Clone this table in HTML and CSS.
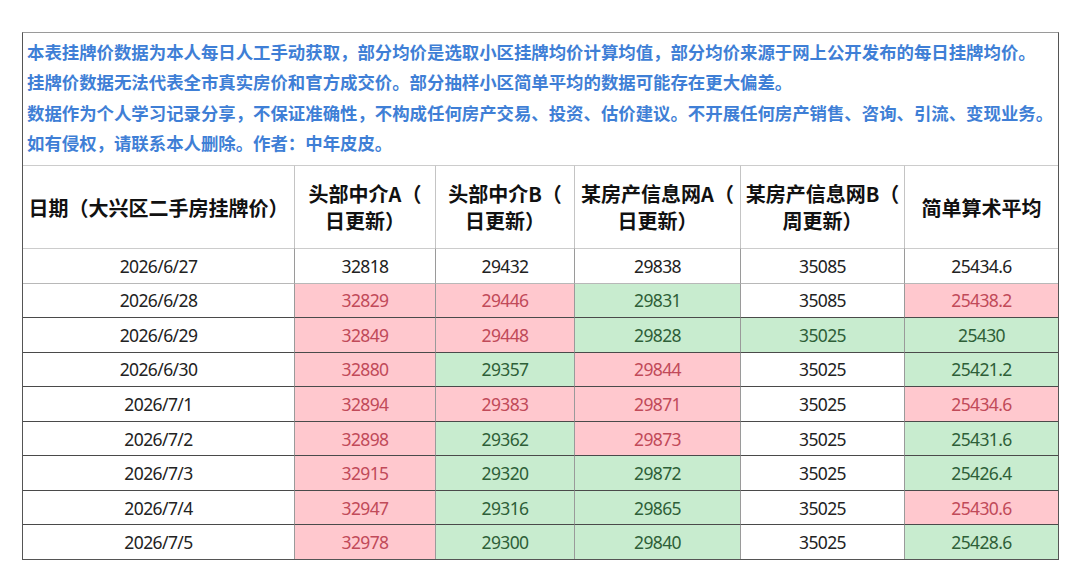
FILE: index.html
```html
<!DOCTYPE html>
<html lang="zh-CN">
<head>
<meta charset="utf-8">
<title>大兴区二手房挂牌价</title>
<link rel="stylesheet" href="styles.css">
</head>
<body>
<div class="sheet">
  <div class="notes">
    <p>本表挂牌价数据为本人每日人工手动获取，部分均价是选取小区挂牌均价计算均值，部分均价来源于网上公开发布的每日挂牌均价。</p>
    <p>挂牌价数据无法代表全市真实房价和官方成交价。部分抽样小区简单平均的数据可能存在更大偏差。</p>
    <p>数据作为个人学习记录分享，不保证准确性，不构成任何房产交易、投资、估价建议。不开展任何房产销售、咨询、引流、变现业务。</p>
    <p>如有侵权，请联系本人删除。作者：中年皮皮。</p>
  </div>
  <table class="grid">
    <thead>
      <tr>
        <th class="c-date">日期（大兴区二手房挂牌价）</th>
        <th class="c-a">头部中介A（<br>日更新）</th>
        <th class="c-b">头部中介B（<br>日更新）</th>
        <th class="c-na">某房产信息网A（<br>日更新）</th>
        <th class="c-nb">某房产信息网B（<br>周更新）</th>
        <th class="c-avg">简单算术平均</th>
      </tr>
    </thead>
    <tbody>
      <tr class="first">
        <td>2026/6/27</td><td>32818</td><td>29432</td><td>29838</td><td>35085</td><td>25434.6</td>
      </tr>
      <tr class="second">
        <td>2026/6/28</td><td class="up">32829</td><td class="up">29446</td><td class="down">29831</td><td>35085</td><td class="up">25438.2</td>
      </tr>
      <tr>
        <td>2026/6/29</td><td class="up">32849</td><td class="up">29448</td><td class="down">29828</td><td class="down">35025</td><td class="down">25430</td>
      </tr>
      <tr>
        <td>2026/6/30</td><td class="up">32880</td><td class="down">29357</td><td class="up">29844</td><td>35025</td><td class="down">25421.2</td>
      </tr>
      <tr>
        <td>2026/7/1</td><td class="up">32894</td><td class="up">29383</td><td class="up">29871</td><td>35025</td><td class="up">25434.6</td>
      </tr>
      <tr>
        <td>2026/7/2</td><td class="up">32898</td><td class="down">29362</td><td class="up">29873</td><td>35025</td><td class="down">25431.6</td>
      </tr>
      <tr>
        <td>2026/7/3</td><td class="up">32915</td><td class="down">29320</td><td class="down">29872</td><td>35025</td><td class="down">25426.4</td>
      </tr>
      <tr>
        <td>2026/7/4</td><td class="up">32947</td><td class="down">29316</td><td class="down">29865</td><td>35025</td><td class="up">25430.6</td>
      </tr>
      <tr>
        <td>2026/7/5</td><td class="up">32978</td><td class="down">29300</td><td class="down">29840</td><td>35025</td><td class="down">25428.6</td>
      </tr>
    </tbody>
  </table>
</div>
</body>
</html>
```

FILE: styles.css
```css
html, body {
  margin: 0;
  padding: 0;
  background: #ffffff;
}

body {
  padding-top: 32px;
}

.sheet {
  margin-left: 22px;
  width: 1037px;
  box-sizing: border-box;
  border: 1px solid #555555;
  border-top-color: #9a9a9a;
  background: #ffffff;
}

.notes {
  height: 132px;
  box-sizing: border-box;
  padding: 4px 0 0 4px;
  color: #3f7fd6;
  font-family: "Noto Sans CJK SC", "Noto Sans", sans-serif;
  font-weight: 700;
  font-size: 17.4px;
  line-height: 30.3px;
}

.notes p {
  margin: 0;
  white-space: nowrap;
}

.grid {
  width: 1035px;
  table-layout: fixed;
  border-collapse: separate;
  border-spacing: 0;
}

.grid th,
.grid td {
  box-sizing: border-box;
  padding: 0;
  text-align: center;
  vertical-align: middle;
  border-left: 1px solid #9a9a9a;
  border-top: 1px solid #4a4a4a;
}

.grid th:first-child,
.grid td:first-child {
  border-left: 0;
}

.grid th {
  height: 83px;
  border-top-color: #cccccc;
  border-left-color: #c4c4c4;
  color: #111111;
  font-family: "Noto Sans CJK SC", "Noto Sans", sans-serif;
  font-weight: 700;
  font-size: 20px;
  line-height: 27px;
}

.c-date { width: 271px; }
.c-a { width: 141px; }
.c-b { width: 139px; }
.c-na { width: 166px; }
.c-nb { width: 164px; }
.c-avg { width: 154px; }

.grid td {
  height: 34.56px;
  color: #222222;
  font-family: "Noto Sans", "Noto Sans CJK SC", sans-serif;
  font-size: 17.5px;
  letter-spacing: -0.6px;
  line-height: 20px;
}

.grid tr.first td {
  border-top-color: #cccccc;
}

.grid tr.second td {
  border-top-color: #b8b8b8;
}

.grid td.up {
  background: #ffc8ce;
  color: #c14a59;
}

.grid td.down {
  background: #c8eccf;
  color: #2e5f38;
}
```
